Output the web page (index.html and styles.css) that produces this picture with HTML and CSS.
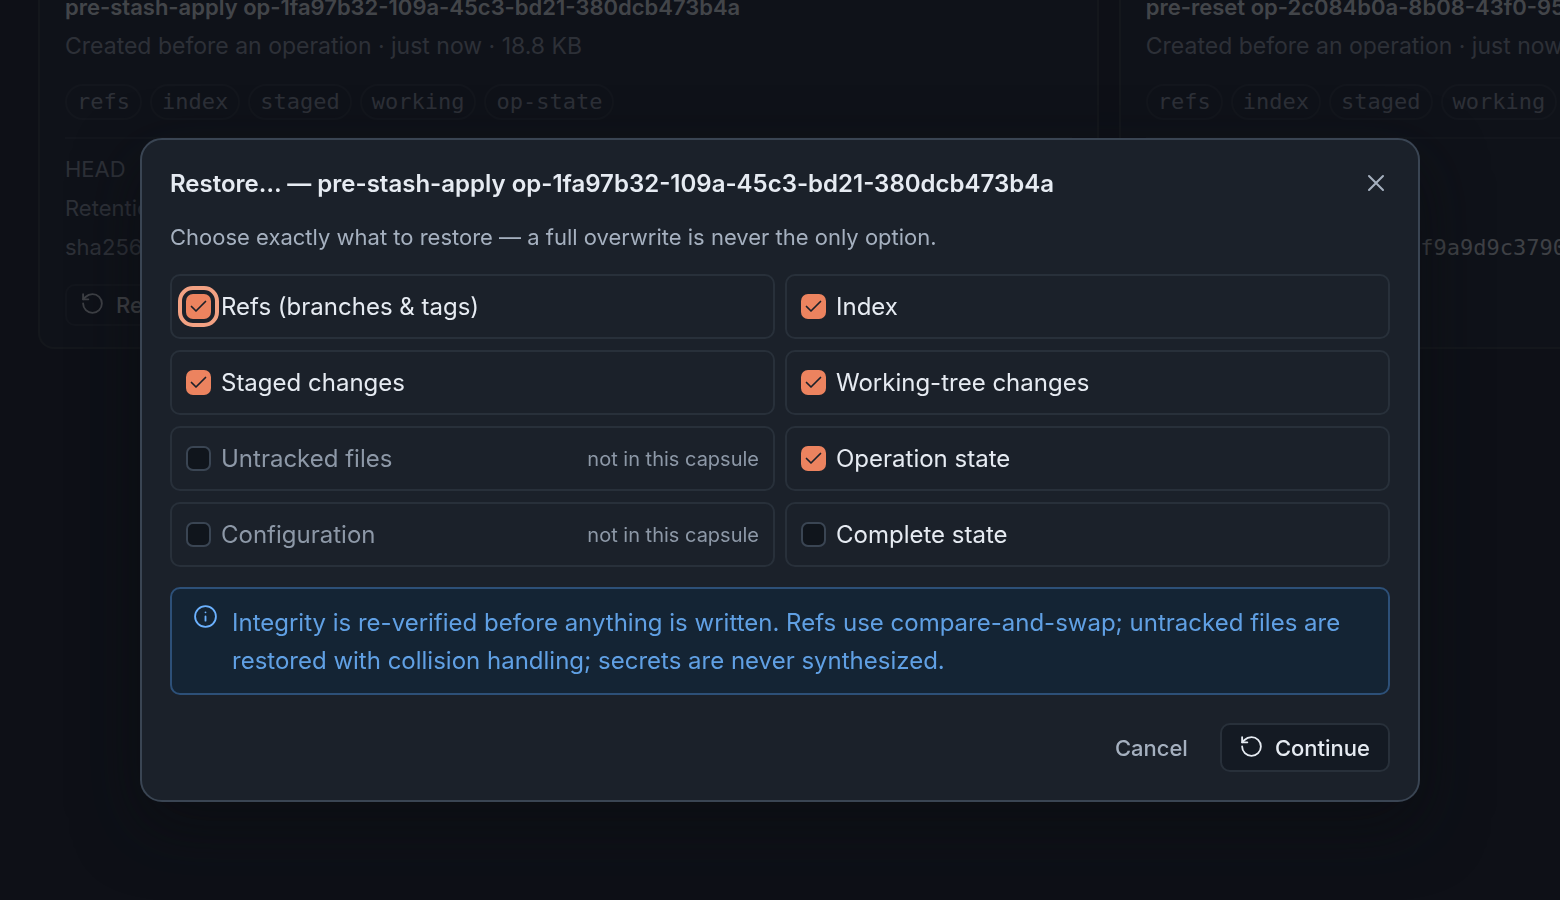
FILE: index.html
```html
<!DOCTYPE html>
<html lang="en">
<head>
  <meta charset="UTF-8" />
  <meta name="viewport" content="width=device-width, initial-scale=1.0"/>
  <title>Restore capsule</title>
  <link rel="stylesheet" href="styles.css">
</head>
<body>

  <svg class="sprite" aria-hidden="true">
    <symbol id="icon-restore" viewBox="0 0 24 24">
      <path d="M3 12a9 9 0 1 0 9-9 9.75 9.75 0 0 0-6.74 2.74L3 8"/>
      <path d="M3 3v5h5"/>
    </symbol>
    <symbol id="icon-close" viewBox="0 0 24 24">
      <path d="M18 6 6 18M6 6l12 12"/>
    </symbol>
    <symbol id="icon-info" viewBox="0 0 24 24">
      <circle cx="12" cy="12" r="10"/>
      <path d="M12 16v-4M12 8h.01"/>
    </symbol>
  </svg>

  <!-- Capsule list -->
  <main class="capsules">
    <article class="card">
      <h2 class="card-title">pre-stash-apply op-1fa97b32-109a-45c3-bd21-380dcb473b4a</h2>
      <p class="card-meta">Created before an operation · just now · 18.8 KB</p>
      <ul class="tags">
        <li>refs</li>
        <li>index</li>
        <li>staged</li>
        <li>working</li>
        <li>op-state</li>
      </ul>
      <dl class="facts">
        <div><dt>HEAD</dt></div>
        <div><dt>Retention</dt></div>
        <div><dt>sha256</dt></div>
      </dl>
      <button class="btn" type="button"><svg class="icon"><use href="#icon-restore"/></svg>Restore…</button>
    </article>

    <article class="card">
      <h2 class="card-title">pre-reset op-2c084b0a-8b08-43f0-95</h2>
      <p class="card-meta">Created before an operation · just now</p>
      <ul class="tags">
        <li>refs</li>
        <li>index</li>
        <li>staged</li>
        <li>working</li>
      </ul>
      <dl class="facts">
        <div><dt>HEAD</dt></div>
        <div><dt>Retention</dt></div>
        <div><dt>sha256</dt><dd>f9a9d9c3790</dd></div>
      </dl>
      <button class="btn" type="button"><svg class="icon"><use href="#icon-restore"/></svg>Restore…</button>
    </article>
  </main>

  <!-- Restore dialog -->
  <div class="overlay">
    <section class="dialog" role="dialog" aria-modal="true" aria-labelledby="dialog-title">
      <header class="dialog-header">
        <h1 id="dialog-title">Restore… — pre-stash-apply op-1fa97b32-109a-45c3-bd21-380dcb473b4a</h1>
        <button class="close" type="button" aria-label="Close"><svg class="icon"><use href="#icon-close"/></svg></button>
      </header>
      <p class="lead">Choose exactly what to restore — a full overwrite is never the only option.</p>

      <form class="options">
        <label class="option"><input class="focused" type="checkbox" checked><span>Refs (branches &amp; tags)</span></label>
        <label class="option"><input type="checkbox" checked><span>Index</span></label>
        <label class="option"><input type="checkbox" checked><span>Staged changes</span></label>
        <label class="option"><input type="checkbox" checked><span>Working-tree changes</span></label>
        <label class="option disabled"><input type="checkbox" disabled><span>Untracked files</span><small>not in this capsule</small></label>
        <label class="option"><input type="checkbox" checked><span>Operation state</span></label>
        <label class="option disabled"><input type="checkbox" disabled><span>Configuration</span><small>not in this capsule</small></label>
        <label class="option"><input type="checkbox"><span>Complete state</span></label>
      </form>

      <div class="notice">
        <svg class="icon"><use href="#icon-info"/></svg>
        <p>Integrity is re-verified before anything is written. Refs use compare-and-swap; untracked files are restored with collision handling; secrets are never synthesized.</p>
      </div>

      <footer class="actions">
        <button class="btn ghost" type="button">Cancel</button>
        <button class="btn" type="button"><svg class="icon"><use href="#icon-restore"/></svg>Continue</button>
      </footer>
    </section>
  </div>

</body>
</html>
```

FILE: styles.css
```css
* {
  box-sizing: border-box;
  margin: 0;
  padding: 0;
}

body {
  background: #171b25;
  color: #e6ebf2;
  font-family: Inter, sans-serif;
  font-size: 24px;
  height: 100vh;
  overflow: hidden;
}

.sprite {
  display: none;
}

.icon {
  width: 25px;
  height: 25px;
  flex: none;
  fill: none;
  stroke: currentColor;
  stroke-width: 1.75;
  stroke-linecap: round;
  stroke-linejoin: round;
}

/* Capsule list */
.capsules {
  display: grid;
  grid-template-columns: repeat(2, 68vw);
  gap: 20px;
  padding-left: 38px;
}

.card {
  border: 2px solid #262b30;
  border-top: none;
  border-radius: 0 0 16px 16px;
  background: #1a1f29;
  padding: 0 25px 22px;
  height: 349px;
  overflow: hidden;
}

.card-title {
  font-size: 22px;
  font-weight: 600;
  line-height: 28px;
  margin-top: -7px;
  white-space: nowrap;
  color: #9a9da1;
}

.card-meta {
  font-size: 23px;
  line-height: 28px;
  margin-top: 11px;
  color: #646974;
}

.tags {
  display: flex;
  gap: 8px;
  list-style: none;
  margin-top: 24px;
  padding-bottom: 17px;
  border-bottom: 2px solid #242932;
}

.tags li {
  border: 2px solid #242932;
  border-radius: 18px;
  padding: 0 10px;
  font: 22px/32px "DejaVu Sans Mono", monospace;
  color: #646974;
}

.facts {
  font-size: 22px;
  line-height: 39px;
  margin: 11px 0 17px;
  color: #646974;
}

.facts div {
  display: flex;
  justify-content: space-between;
}

.facts dd {
  flex: 1;
  padding-left: 197px;
  font-family: "DejaVu Sans Mono", monospace;
  color: #8f9296;
}

.card .btn {
  border-color: #242932;
  color: #8f9296;
  background: none;
  height: 42px;
  padding: 0 14px 0 13px;
}

/* Dialog */
.overlay {
  position: fixed;
  inset: 0;
  display: flex;
  justify-content: center;
  align-items: flex-start;
  padding: 138px 140px 0;
  background: rgba(8, 10, 15, 0.6);
}

.dialog {
  width: 100%;
  border: 2px solid #3a4553;
  border-radius: 22px;
  background: #1b212a;
  padding: 28px;
  box-shadow: 0 24px 64px rgba(12, 14, 16, 0.6);
}

.dialog-header {
  display: flex;
  justify-content: space-between;
  align-items: center;
}

.dialog-header h1 {
  font-size: 24px;
  font-weight: 600;
  line-height: 32px;
}

.close {
  display: flex;
  border: none;
  background: none;
  color: #a5b0bf;
  cursor: pointer;
}

.close .icon {
  width: 28px;
  height: 28px;
}

.close .icon,
.btn .icon {
  margin-bottom: 3px;
}

.lead {
  font-size: 22px;
  line-height: 36px;
  margin: 19px 0;
  color: #a5b0bf;
}

.options {
  display: grid;
  grid-template-columns: 1fr 1fr;
  gap: 11px 10px;
}

.option {
  display: flex;
  align-items: center;
  gap: 10px;
  height: 65px;
  padding: 0 14px;
  border: 2px solid #28303a;
  border-radius: 10px;
}

.option input {
  appearance: none;
  width: 25px;
  height: 25px;
  border: 2px solid #3a4553;
  border-radius: 7px;
  background: #10151c;
}

.option input:checked {
  border: none;
  background: #ec835f url("data:image/svg+xml,%3Csvg xmlns='http://www.w3.org/2000/svg' viewBox='0 0 25 25' fill='none' stroke='%231b212a' stroke-width='1.7' stroke-linecap='round' stroke-linejoin='round'%3E%3Cpath d='M5.5 12.5l4.5 4.5 9.5-9.5'/%3E%3C/svg%3E") center / 25px no-repeat;
}

.option .focused {
  outline: 4px solid #f2a183;
  outline-offset: 4px;
}

.option small {
  font-size: 20px;
  margin-left: auto;
  color: #8d98a7;
}

.option.disabled {
  color: #8d98a7;
}

.notice {
  display: flex;
  gap: 14px;
  margin-top: 20px;
  padding: 15px 20px 13px 21px;
  border: 2px solid #2d5078;
  border-radius: 10px;
  background: #142434;
  line-height: 38px;
  color: #60a0e4;
}

.notice .icon {
  color: #6cb2ff;
}

.actions {
  display: flex;
  justify-content: flex-end;
  gap: 12px;
  margin-top: 28px;
}

.btn {
  display: flex;
  align-items: center;
  gap: 11px;
  height: 49px;
  padding: 0 18px 0 17px;
  border: 2px solid #28303a;
  border-radius: 10px;
  background: #141a23;
  color: #e6ebf2;
  font: 500 22px Inter, sans-serif;
  cursor: pointer;
}

.btn.ghost {
  padding: 0 18px;
  border-color: transparent;
  background: none;
  color: #a5b0bf;
}
```
